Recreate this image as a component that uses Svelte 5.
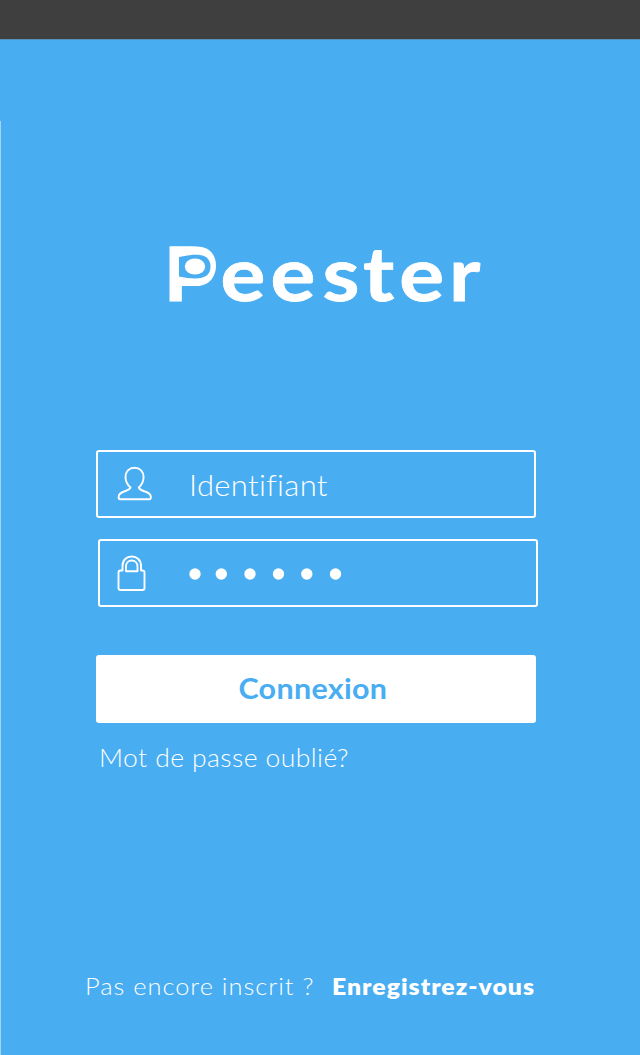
<script>
  const dots = [195, 221.3, 250, 278.5, 306.8, 335.5];
</script>

<div class="screen">
  <header></header>
  <main>
    <h1 class="logo">
      <svg viewBox="0 0 340 90" width="340" height="90">
        <text transform="scale(1.12 1)" x="3 54 98.700 145.200 181.200 213.700 258" y="61.300">Peester</text>
        <path class="face" d="M10 6.500H37C49 6.500 56 14.500 56 25.500S49 46 37 46H10Z" />
        <path class="socket" d="M19 17C34 13.500 50.500 12 50.500 26.500S34 39.500 19 36.500Z" />
        <ellipse class="face" cx="35" cy="26.500" rx="10.200" ry="8" />
      </svg>
    </h1>
    <form onsubmit={(e) => e.preventDefault()}>
      <div class="field user">
        <svg class="icon" viewBox="0 0 36 36" width="36" height="36">
          <path d="M13.500 22.500C10 19.500 8.500 16 8.500 12C8.500 6.500 12 2.800 17.500 2.800S26.600 6.500 26.600 12C26.600 16 25 19.500 21.800 22.500C22 24 24 25 26.500 26C31 27.500 33.800 28.500 33.800 31.500V33Q33.800 34.200 32.500 34.200H3Q1.700 34.200 1.700 33V31.500C1.700 28.500 4 27.500 8.500 26C11 25 13.500 24 13.500 22.500Z" />
        </svg>
        <span class="placeholder">Identifiant</span>
      </div>
      <div class="field pass">
        <svg class="icon" viewBox="0 0 30 38" width="30" height="38">
          <path d="M5.500 16.500V12C5.500 6 9.500 2.500 14.700 2.500S24 6 24 12V16.500H25.500Q27.500 16.500 27.500 18.500V34Q27.500 36 25.500 36H3.500Q1.500 36 1.500 34V18.500Q1.500 16.500 3.500 16.500Z" />
          <path d="M9 17.300V12.500C9 8.800 11.500 6.500 14.700 6.500S20.500 8.800 20.500 12.500V17.300Z" />
        </svg>
        <svg class="dots" viewBox="188 0 154 14" width="154" height="14">
          {#each dots as x}
            <circle cx={x} cy="7" r="5.700" />
          {/each}
        </svg>
      </div>
      <button><span>Connexion</span></button>
      <p class="forgot">Mot de passe oublié?</p>
    </form>
    <footer><span class="ask">Pas encore inscrit ?</span><b>Enregistrez-vous</b></footer>
  </main>
</div>

<style>
  :global(body) { background: #49adf2; }
  .screen {
    width: 640px;
    height: 1055px;
    display: flex;
    flex-direction: column;
    overflow: hidden;
    background: linear-gradient(#a5d3f3, #a5d3f3) 0 121px / 1px 100% no-repeat #49adf2;
    font-family: Lato, "Open Sans", sans-serif;
    color: #fff;
  }
  header { flex: none; height: 39px; background: #3f3f3f; border-bottom: 1px solid #5492bd; box-sizing: content-box; }
  main { flex: 1; display: flex; flex-direction: column; }
  .logo { margin: 200px 0 0 160px; height: 90px; line-height: 90px; }
  .logo svg { display: block; overflow: visible; }
  .logo text { font: 700 75px Lato, sans-serif; fill: #fff; stroke: #fff; stroke-width: 0.8; }
  .face { fill: #fff; }
  .socket { fill: #49adf2; }
  form { margin: 120px 0 0 96px; }
  .field { display: flex; align-items: center; box-sizing: border-box; width: 440px; height: 68px; border: 2px solid #fff; border-radius: 3px; }
  .pass { margin: 21px 0 0 2px; }
  .icon { flex: none; fill: none; stroke: #fff; stroke-width: 1.9; stroke-linejoin: round; }
  .user .icon { margin: -2px 0 0 19px; }
  .pass .icon { margin-left: 17px; margin-top: -1px; }
  .dots { margin: 2px 0 0 41px; fill: #fff; }
  .placeholder { margin: 1px 0 0 36px; font-size: 29px; font-weight: 300; letter-spacing: 0.3px; line-height: 36px; transform: scaleX(1.07); transform-origin: left; }
  button { display: flex; justify-content: center; align-items: center; width: 440px; height: 68px; margin: 48px 0 0; padding: 0 7px 2px 0; border: 0; border-radius: 3px; background: #fff; color: #49adf2; font: 700 29px/36px Lato, sans-serif; letter-spacing: 0.3px; }
  button span { transform: scaleX(1.05); }
  .forgot { margin: 19px 0 0 3px; font-size: 25px; font-weight: 300; line-height: 30px; letter-spacing: 0.4px; white-space: nowrap; transform: scaleX(1.06); transform-origin: left; }
  footer { display: flex; align-items: baseline; margin: auto 0 53px 85px; line-height: 30px; white-space: nowrap; }
  .ask { width: 247px; font-size: 23px; font-weight: 300; letter-spacing: 0.9px; transform: scaleX(1.105); transform-origin: left; }
  b { font-size: 22px; font-weight: 800; letter-spacing: 0.9px; transform: scaleX(1.125); transform-origin: left; }
</style>
